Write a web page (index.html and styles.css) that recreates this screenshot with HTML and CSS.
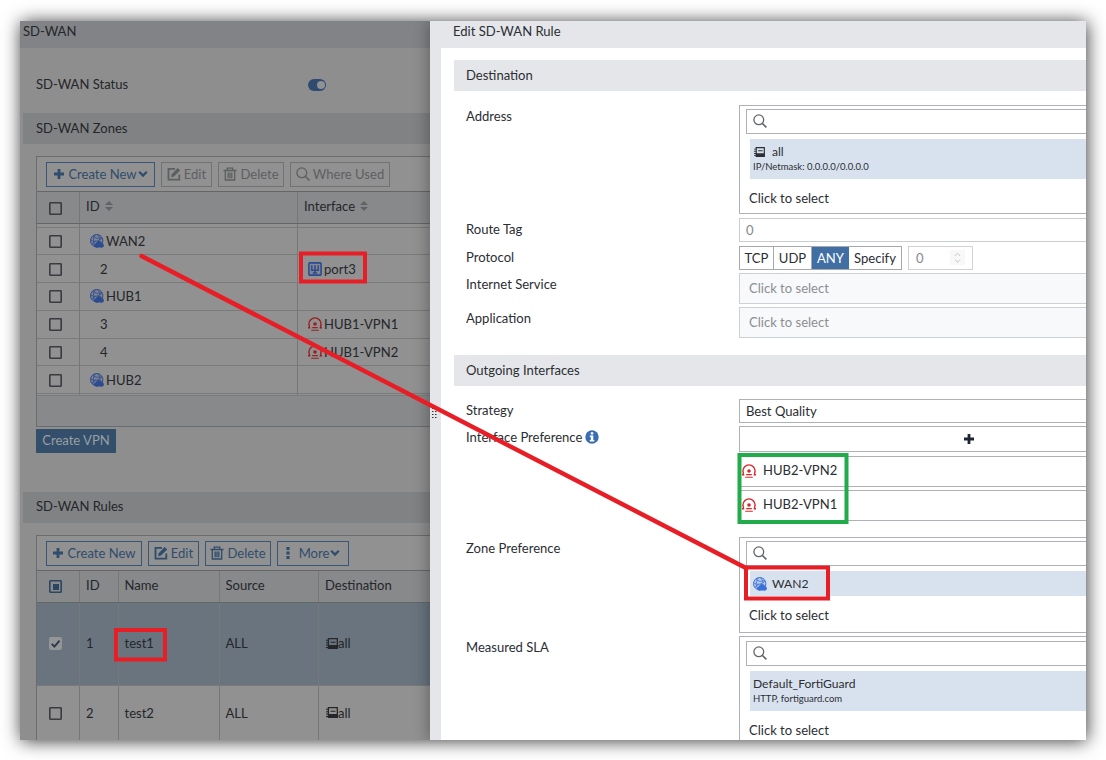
FILE: index.html
```html
<!DOCTYPE html>
<html lang="en">
<head>
  <meta charset="UTF-8">
  <meta name="viewport" content="width=device-width, initial-scale=1.0">
  <title>Edit SD-WAN Rule</title>
  <link rel="stylesheet" href="styles.css">
</head>
<body>
  <svg class="defs" width="0" height="0">
    <symbol id="plus" viewBox="0 0 12 12"><path d="M6 1v10M1 6h10" fill="none" stroke="currentColor" stroke-width="2.8"/></symbol>
    <symbol id="chevron" viewBox="0 0 10 8"><path d="M1.2 1.8 5 5.6 8.800 1.8" fill="none" stroke="currentColor" stroke-width="2.2"/></symbol>
    <symbol id="edit" viewBox="0 0 14 14">
      <path d="M8 1.8H1.5v10.8h10.8V7.5" fill="none" stroke="currentColor" stroke-width="1.8"/>
      <path d="M4 10.3l.7-3L10.600 1l2.600 2.500L7 9.500z" fill="currentColor"/>
    </symbol>
    <symbol id="trash" viewBox="0 0 14 14">
      <path d="M.5 3.500h13M4.300 3V1.200h5.400V3M2.300 3.500v9.500h9.400V3.500M5.200 5.500v5.800M7 5.500v5.800M8.800 5.500v5.800" fill="none" stroke="currentColor" stroke-width="1.300"/>
    </symbol>
    <symbol id="search" viewBox="0 0 14 14">
      <circle cx="5.800" cy="5.800" r="4.900" fill="none" stroke="currentColor" stroke-width="1.300"/>
      <path d="M9.200 9.200l4.200 4.200" stroke="currentColor" stroke-width="1.600"/>
    </symbol>
    <symbol id="dots" viewBox="0 0 4 12"><path d="M.4 0h3.200v3H.4zM.4 4.500h3.200v3H.4zM.4 9h3.200v3H.4z" fill="currentColor"/></symbol>
    <symbol id="sort" viewBox="0 0 8 10"><path d="M4 0l4 4H0zM4 10l4-4H0z" fill="currentColor"/></symbol>
    <symbol id="zone" viewBox="0 0 14 14">
      <circle cx="6.700" cy="6.700" r="6.200" fill="currentColor" fill-opacity=".2" stroke="currentColor" stroke-width="1"/>
      <path d="M1 6C4 8.200 9 7.500 12 4M3 2.500c2 2 6 2.400 8.500 1M5.500.8C2.500 4 2.800 9 5 12M7.500.8c2 2 2.500 3.500 2.300 5.500M2 10l4-3" fill="none" stroke="currentColor" stroke-width=".8"/>
      <path d="M6 13.500h6.500V10H6z" fill="currentColor"/>
      <circle cx="6.200" cy="11.400" r="2.100" fill="currentColor"/>
      <circle cx="9" cy="9.900" r="2.900" fill="currentColor"/>
      <circle cx="11.800" cy="11.400" r="2.100" fill="currentColor"/>
    </symbol>
    <symbol id="port" viewBox="0 0 14 14">
      <rect x=".9" y=".9" width="12.200" height="12.200" rx=".8" fill="currentColor" fill-opacity=".15" stroke="currentColor" stroke-width="1.600"/>
      <path d="M3.800 3.300v4.900h6.400V3.300M7 3.300v8M4.800 11h4.400" fill="none" stroke="currentColor" stroke-width="1.500"/>
    </symbol>
    <symbol id="tunnel" viewBox="0 0 14 14">
      <path d="M0 10.700h1.600L.9 7a6.100 6.100 0 0 1 12.200 0l-.7 3.700H14" fill="none" stroke="currentColor" stroke-width="1.400"/>
      <circle cx="7" cy="7" r="1.800" fill="currentColor"/>
      <path d="M4.200 10.600h5.600M3.200 13.200h7.600" stroke="currentColor" stroke-width="1.100"/>
    </symbol>
    <symbol id="address" viewBox="0 0 12 11">
      <path d="M2.400.7h8.900v9.600H2.400z" fill="none" stroke="currentColor" stroke-width="1.300"/>
      <path d="M2 7h9.500v3.500H2zM4.500 3.700h5v1.100h-5zM0 1.800h2v1H0zM0 4.200h2v1H0zM0 6.600h2v1H0zM0 9h2v1H0z" fill="currentColor"/>
    </symbol>
    <symbol id="info" viewBox="0 0 14 14">
      <circle cx="7" cy="7" r="6.700" fill="#3a6cb4"/>
      <path d="M5.800 2.300h2.500v2.100H5.800zM4.800 5.600h3.500v4.300h1v1.500H4.800V9.900h1V7.100h-1z" fill="#fff"/>
    </symbol>
  </svg>

  <div class="frame">
    <main class="page">
      <header class="page-title">SD-WAN</header>
      <div class="status">
        <span>SD-WAN Status</span>
        <span class="toggle"></span>
      </div>

      <h2 class="bar">SD-WAN Zones</h2>
      <section class="panel zones">
        <div class="toolbar">
          <button class="btn w109"><svg class="i12"><use href="#plus"/></svg>Create New<svg class="chev"><use href="#chevron"/></svg></button>
          <button class="btn off w51"><svg class="i14"><use href="#edit"/></svg>Edit</button>
          <button class="btn off w66"><svg class="i14"><use href="#trash"/></svg>Delete</button>
          <button class="btn off w100"><svg class="i14"><use href="#search"/></svg>Where Used</button>
        </div>
        <div class="row head">
          <div class="cell"><i class="check"></i></div>
          <div class="cell">ID<svg class="sort"><use href="#sort"/></svg></div>
          <div class="cell">Interface<svg class="sort"><use href="#sort"/></svg></div>
        </div>
        <div class="row spacer"><div class="cell"></div><div class="cell"></div><div class="cell"></div></div>
        <div class="row">
          <div class="cell"><i class="check"></i></div>
          <div class="cell zone"><svg class="i14"><use href="#zone"/></svg>WAN2</div>
          <div class="cell"></div>
        </div>
        <div class="row">
          <div class="cell"><i class="check"></i></div>
          <div class="cell member">2</div>
          <div class="cell port"><svg class="i14"><use href="#port"/></svg>port3</div>
        </div>
        <div class="row">
          <div class="cell"><i class="check"></i></div>
          <div class="cell zone"><svg class="i14"><use href="#zone"/></svg>HUB1</div>
          <div class="cell"></div>
        </div>
        <div class="row">
          <div class="cell"><i class="check"></i></div>
          <div class="cell member">3</div>
          <div class="cell vpn"><svg class="i14"><use href="#tunnel"/></svg>HUB1-VPN1</div>
        </div>
        <div class="row">
          <div class="cell"><i class="check"></i></div>
          <div class="cell member">4</div>
          <div class="cell vpn"><svg class="i14"><use href="#tunnel"/></svg>HUB1-VPN2</div>
        </div>
        <div class="row">
          <div class="cell"><i class="check"></i></div>
          <div class="cell zone"><svg class="i14"><use href="#zone"/></svg>HUB2</div>
          <div class="cell"></div>
        </div>
        <div class="row spacer last"><div class="cell"></div><div class="cell"></div><div class="cell"></div></div>
        <div class="panel-foot"></div>
      </section>
      <button class="create-vpn">Create VPN</button>

      <h2 class="bar">SD-WAN Rules</h2>
      <section class="panel rules">
        <div class="toolbar">
          <button class="btn w96"><svg class="i12"><use href="#plus"/></svg>Create New</button>
          <button class="btn w51"><svg class="i14"><use href="#edit"/></svg>Edit</button>
          <button class="btn w66"><svg class="i14"><use href="#trash"/></svg>Delete</button>
          <button class="btn w72"><svg class="dots"><use href="#dots"/></svg>More<svg class="chev"><use href="#chevron"/></svg></button>
        </div>
        <div class="row head">
          <div class="cell"><i class="check some"></i></div>
          <div class="cell">ID</div>
          <div class="cell">Name</div>
          <div class="cell">Source</div>
          <div class="cell">Destination</div>
        </div>
        <div class="row selected">
          <div class="cell"><i class="check on"><svg viewBox="0 0 12 12"><path d="M2.500 6.300l2.500 2.500 4.700-5.500"/></svg></i></div>
          <div class="cell">1</div>
          <div class="cell">test1</div>
          <div class="cell">ALL</div>
          <div class="cell addr"><svg><use href="#address"/></svg>all</div>
        </div>
        <div class="row second">
          <div class="cell"><i class="check"></i></div>
          <div class="cell">2</div>
          <div class="cell">test2</div>
          <div class="cell">ALL</div>
          <div class="cell addr"><svg><use href="#address"/></svg>all</div>
        </div>
      </section>
    </main>

    <aside class="drawer">
      <div class="grip"><svg width="5" height="11"><path d="M0 1.500h5M0 4.500h5M0 7.500h5M0 10.500h5" stroke="#333" stroke-width="1" stroke-dasharray="1.500 1.500"/></svg></div>
      <div class="drawer-main">
        <header class="drawer-title">Edit SD-WAN Rule</header>
        <form class="form">
          <h2 class="bar">Destination</h2>
          <div class="field address">
            <label>Address</label>
            <div class="picker">
              <div class="search"><svg class="i14"><use href="#search"/></svg></div>
              <div class="item">
                <div class="name"><svg><use href="#address"/></svg>all</div>
                <small>IP/Netmask: 0.0.0.0/0.0.0.0</small>
              </div>
              <div class="hint">Click to select</div>
            </div>
          </div>
          <div class="field tag">
            <label>Route Tag</label>
            <div class="input muted">0</div>
          </div>
          <div class="field protocol">
            <label>Protocol</label>
            <div class="choices">
              <div class="group">
                <span>TCP</span><span>UDP</span><span class="active">ANY</span><span>Specify</span>
              </div>
              <div class="number">0<svg width="15" height="15"><rect width="15" height="15" fill="#f8f8f9"/><path d="M5 6l2.500-3L10 6M5 9.500l2.500 3 2.500-3" fill="none" stroke="#c9cacc"/></svg></div>
            </div>
          </div>
          <div class="field service">
            <label>Internet Service</label>
            <div class="input disabled">Click to select</div>
          </div>
          <div class="field application">
            <label>Application</label>
            <div class="input disabled">Click to select</div>
          </div>

          <h2 class="bar">Outgoing Interfaces</h2>
          <div class="field strategy">
            <label>Strategy</label>
            <div class="input">Best Quality</div>
          </div>
          <div class="field preference">
            <label>Interface Preference<svg class="i14"><use href="#info"/></svg></label>
            <div class="stack">
              <div class="add"><svg class="i12"><use href="#plus"/></svg></div>
              <div class="entry"><svg class="i14"><use href="#tunnel"/></svg>HUB2-VPN2</div>
              <div class="entry"><svg class="i14"><use href="#tunnel"/></svg>HUB2-VPN1</div>
            </div>
          </div>
          <div class="field zone-pref">
            <label>Zone Preference</label>
            <div class="picker">
              <div class="search"><svg class="i14"><use href="#search"/></svg></div>
              <div class="item single">
                <div class="name zone"><svg class="i14"><use href="#zone"/></svg>WAN2</div>
              </div>
              <div class="hint">Click to select</div>
            </div>
          </div>
          <div class="field sla">
            <label>Measured SLA</label>
            <div class="picker">
              <div class="search"><svg class="i14"><use href="#search"/></svg></div>
              <div class="item">
                <div class="name">Default_FortiGuard</div>
                <small>HTTP, fortiguard.com</small>
              </div>
              <div class="hint">Click to select</div>
            </div>
          </div>
        </form>
      </div>
    </aside>
  </div>

  <svg class="marks" width="1106" height="760">
    <g fill="none" stroke="#e81e27" stroke-width="4">
      <path d="M141.500 256 746 568" stroke-width="4.500" stroke-linecap="round"/>
      <rect x="301" y="253.500" width="64" height="28"/>
      <rect x="116" y="630" width="49" height="29.500"/>
      <rect x="746" y="567.500" width="82" height="31"/>
    </g>
    <rect x="739.500" y="455" width="107" height="67" fill="none" stroke="#22ab4b" stroke-width="4"/>
  </svg>
</body>
</html>
```
FILE: styles.css
```css
* {
  box-sizing: border-box;
}
body {
  margin: 0;
  width: 1106px;
  height: 760px;
  overflow: hidden;
  background: #fff;
  font-family: Lato, sans-serif;
  font-size: 13.05px;
  line-height: 20px;
  color: #2b2e33;
}
svg {
  flex: none;
}
.defs {
  position: absolute;
}
.frame {
  display: flex;
  width: 1066px;
  height: 719px;
  margin: 21px 20px 20px;
  overflow: hidden;
  box-shadow: 1px 1px 17px rgba(0, 0, 0, 0.78);
}
h2 {
  font-size: inherit;
  font-weight: normal;
  margin: 0;
}
.i12 {
  width: 12px;
  height: 12px;
}
.i14 {
  width: 14px;
  height: 14px;
}

/* dimmed page */
.page {
  width: 410px;
  flex: none;
  overflow: hidden;
  background: #8e8e8e;
  color: #24262a;
}
.page-title {
  height: 27px;
  padding: 0 3px;
  background: #818386;
}
.status {
  display: flex;
  align-items: center;
  height: 65px;
  padding: 7px 16px 0;
}
.status span:first-child {
  width: 272px;
}
.toggle {
  width: 18px;
  height: 12px;
  margin-top: 2px;
  border-radius: 6px;
  background: #2f4c70;
}
.toggle::after {
  content: "";
  display: block;
  width: 8px;
  height: 8px;
  margin: 2px 0 0 9px;
  border-radius: 50%;
  background: #8f9194;
}
.bar {
  display: flex;
  align-items: center;
  height: 31px;
  padding-bottom: 2px;
}
.page .bar {
  margin-left: 3px;
  padding-left: 13px;
  background: #818284;
}
.panel {
  width: 500px;
  margin: 12px 0 0 16px;
  border: 1px solid #6b6c6e;
  background: #919191;
}
.toolbar {
  display: flex;
  gap: 6px;
  height: 34px;
  padding: 5px 9px;
}
.btn {
  display: flex;
  align-items: center;
  justify-content: center;
  gap: 3px;
  height: 25px;
  padding: 0 0 1px;
  border: 1px solid #385677;
  background: none;
  color: #2f4c6d;
  font: inherit;
  white-space: nowrap;
}
.off {
  border-color: #717273;
  color: #5d5f61;
}
.w109 { width: 109px; }
.w100 { width: 100px; }
.w96 { width: 96px; }
.w72 { width: 72px; }
.w66 { width: 66px; }
.w51 { width: 51px; }
.chev {
  width: 10px;
  height: 8px;
  margin-left: -2px;
}
.dots {
  width: 4px;
  height: 12px;
  margin-right: 6px;
}
.row {
  display: grid;
  grid-template-columns: 43px 218px 1fr;
  height: 27.75px;
  border-bottom: 1px solid #797a7b;
}
.rules .row {
  grid-template-columns: 43px 38.5px 101px 99.5px 1fr;
}
.cell {
  display: flex;
  align-items: center;
  gap: 2px;
  padding-left: 6px;
  border-right: 1px solid #767778;
}
.row > .cell:first-child {
  justify-content: center;
  padding: 1px 5px 0 0;
}
.row.head {
  height: 33px;
  border-top: 1px solid #656668;
  border-bottom: 1px solid #656668;
  background: #88898b;
}
.head .cell {
  padding-bottom: 3px;
}
.spacer {
  height: 3.5px;
}
.spacer.last {
  height: 2px;
}
.sort {
  width: 8px;
  height: 10px;
  margin-left: 3px;
  color: #606264;
}
.check {
  width: 13px;
  height: 13px;
  border: 1px solid #393b3f;
  border-radius: 1px;
  box-shadow: inset 0 0 0 0.6px #393b3f;
}
.check.some {
  padding: 2.5px;
  border-color: #2c4662;
  box-shadow: inset 0 0 0 0.6px #2c4662;
}
.some::after {
  content: "";
  display: block;
  height: 6px;
  width: 6px;
  background: #2c4662;
}
.check.on {
  border: 0;
  border-radius: 2px;
  background: #939597;
  box-shadow: none;
}
.on svg {
  display: block;
  fill: none;
  stroke: #2a3b50;
  stroke-width: 1.8px;
}
.cell.zone {
  padding-left: 10px;
}
.cell.member {
  padding-left: 20px;
}
.cell.port,
.cell.vpn {
  padding-left: 10px;
}
.cell.zone svg,
.port svg {
  color: #2c4b90;
}
.vpn svg {
  color: #98201f;
}
.panel-foot {
  height: 29.5px;
  background: #88898b;
}
.create-vpn {
  display: block;
  width: 80px;
  height: 24px;
  margin: 2px 0 39px 16px;
  padding: 0 0 1px;
  border: 0;
  background: #334f6b;
  color: #999ea4;
  font: inherit;
}
.rules .selected {
  height: 83px;
  background: #69747f;
}
.rules .selected .cell {
  padding-bottom: 1px;
}
.rules .second {
  height: 55px;
}
.rules .addr {
  gap: 0;
  padding-left: 7px;
}
.addr svg {
  width: 12px;
  height: 11px;
}

/* drawer */
.drawer {
  display: flex;
  flex: 1;
  min-width: 0;
  background: #fff;
  box-shadow: -2px 0 14px rgba(0, 0, 0, 0.3);
  z-index: 1;
}
.grip {
  display: flex;
  align-items: center;
  width: 11px;
  flex: none;
  padding: 64px 0 0 2px;
  background: #e5e6ea;
}
.drawer-main {
  flex: none;
  width: 660px;
}
.drawer-title {
  height: 27px;
  padding: 0 12px;
  background: #e5e6ea;
}
.form {
  padding: 12px 0 0 13px;
}
.form .bar {
  padding-left: 12px;
  background: #e5e6ea;
}
.field {
  display: grid;
  grid-template-columns: 273px 1fr;
  align-items: start;
  margin-left: 12px;
}
.field label {
  display: flex;
  align-items: center;
  gap: 3px;
  height: 21px;
}
.field.address { height: 113px; margin-top: 14px; }
.field.tag { height: 28px; }
.field.protocol { height: 27px; }
.field.service { height: 34px; }
.field.application { height: 48px; }
.field.strategy { height: 27px; margin-top: 13px; }
.field.preference { height: 111px; }
.field.zone-pref { height: 99px; }

.picker {
  padding: 3px 0 0 6px;
  border: 1px solid #aeb1b8;
}
.address .picker { height: 109px; }
.zone-pref .picker { height: 96px; }
.sla .picker { height: 120px; }
.search {
  display: flex;
  align-items: center;
  height: 25px;
  padding: 0 0 1px 6px;
  border: 1px solid #aeb1b8;
  color: #63666c;
}
.item {
  height: 40px;
  margin: 5px 0 0 4px;
  padding: 3px;
  background: #d8e2ee;
}
.item.single {
  height: 25px;
}
.name {
  display: flex;
  align-items: center;
  gap: 7px;
  height: 19px;
  font-size: 12.1px;
}
.address .name svg {
  width: 11px;
  height: 10px;
  margin-left: 1px;
}
.name.zone svg {
  color: #3a70d8;
}
.name.zone {
  gap: 5px;
}
.item small {
  display: block;
  font-size: 9.5px;
  line-height: 11px;
}
.hint {
  margin: 9px 0 0 3px;
}
.sla .picker { padding-top: 4px; }
.input {
  display: flex;
  align-items: center;
  height: 24px;
  padding: 0 0 1px 6px;
  border: 1px solid #aeb1b8;
}
.muted {
  border-color: #c9ccd0;
  color: #85888d;
}
.disabled {
  height: 31px;
  padding: 0 0 2px 9px;
  border-color: #cdd0d4;
  background: #f8f9fb;
  color: #8b8e93;
}
.choices {
  display: flex;
  gap: 6px;
}
.group {
  display: flex;
  width: 163px;
  height: 24px;
  border: 1px solid #a5a8ae;
}
.group span {
  display: flex;
  align-items: center;
  justify-content: center;
  width: 34px;
  padding-bottom: 1px;
  border-right: 1px solid #a5a8ae;
}
.group span:nth-child(2) {
  width: 38px;
}
.group .active {
  width: 37px;
  border: 0;
  background: #416fa3;
  color: #fff;
}
.group span:last-child {
  flex: 1;
  border: 0;
}
.number {
  display: flex;
  align-items: center;
  justify-content: space-between;
  width: 65px;
  height: 24px;
  padding: 0 7px 1px;
  border: 1px solid #d0d2d6;
  color: #85888d;
}
.add {
  display: flex;
  align-items: center;
  justify-content: center;
  width: 460px;
  height: 26px;
  border: 1px solid #aeb1b8;
  color: #1e2532;
}
.entry {
  display: flex;
  align-items: center;
  gap: 7px;
  height: 31px;
  margin-top: 4px;
  padding: 0 0 3px 2px;
  border: 1px solid #aeb1b8;
}
.entry svg {
  margin-top: 2px;
  color: #d8262b;
}
.entry + .entry {
  margin-top: 3px;
}

/* annotations drawn over the page */
.marks {
  position: absolute;
  top: 0;
  left: 0;
  z-index: 2;
}
```
